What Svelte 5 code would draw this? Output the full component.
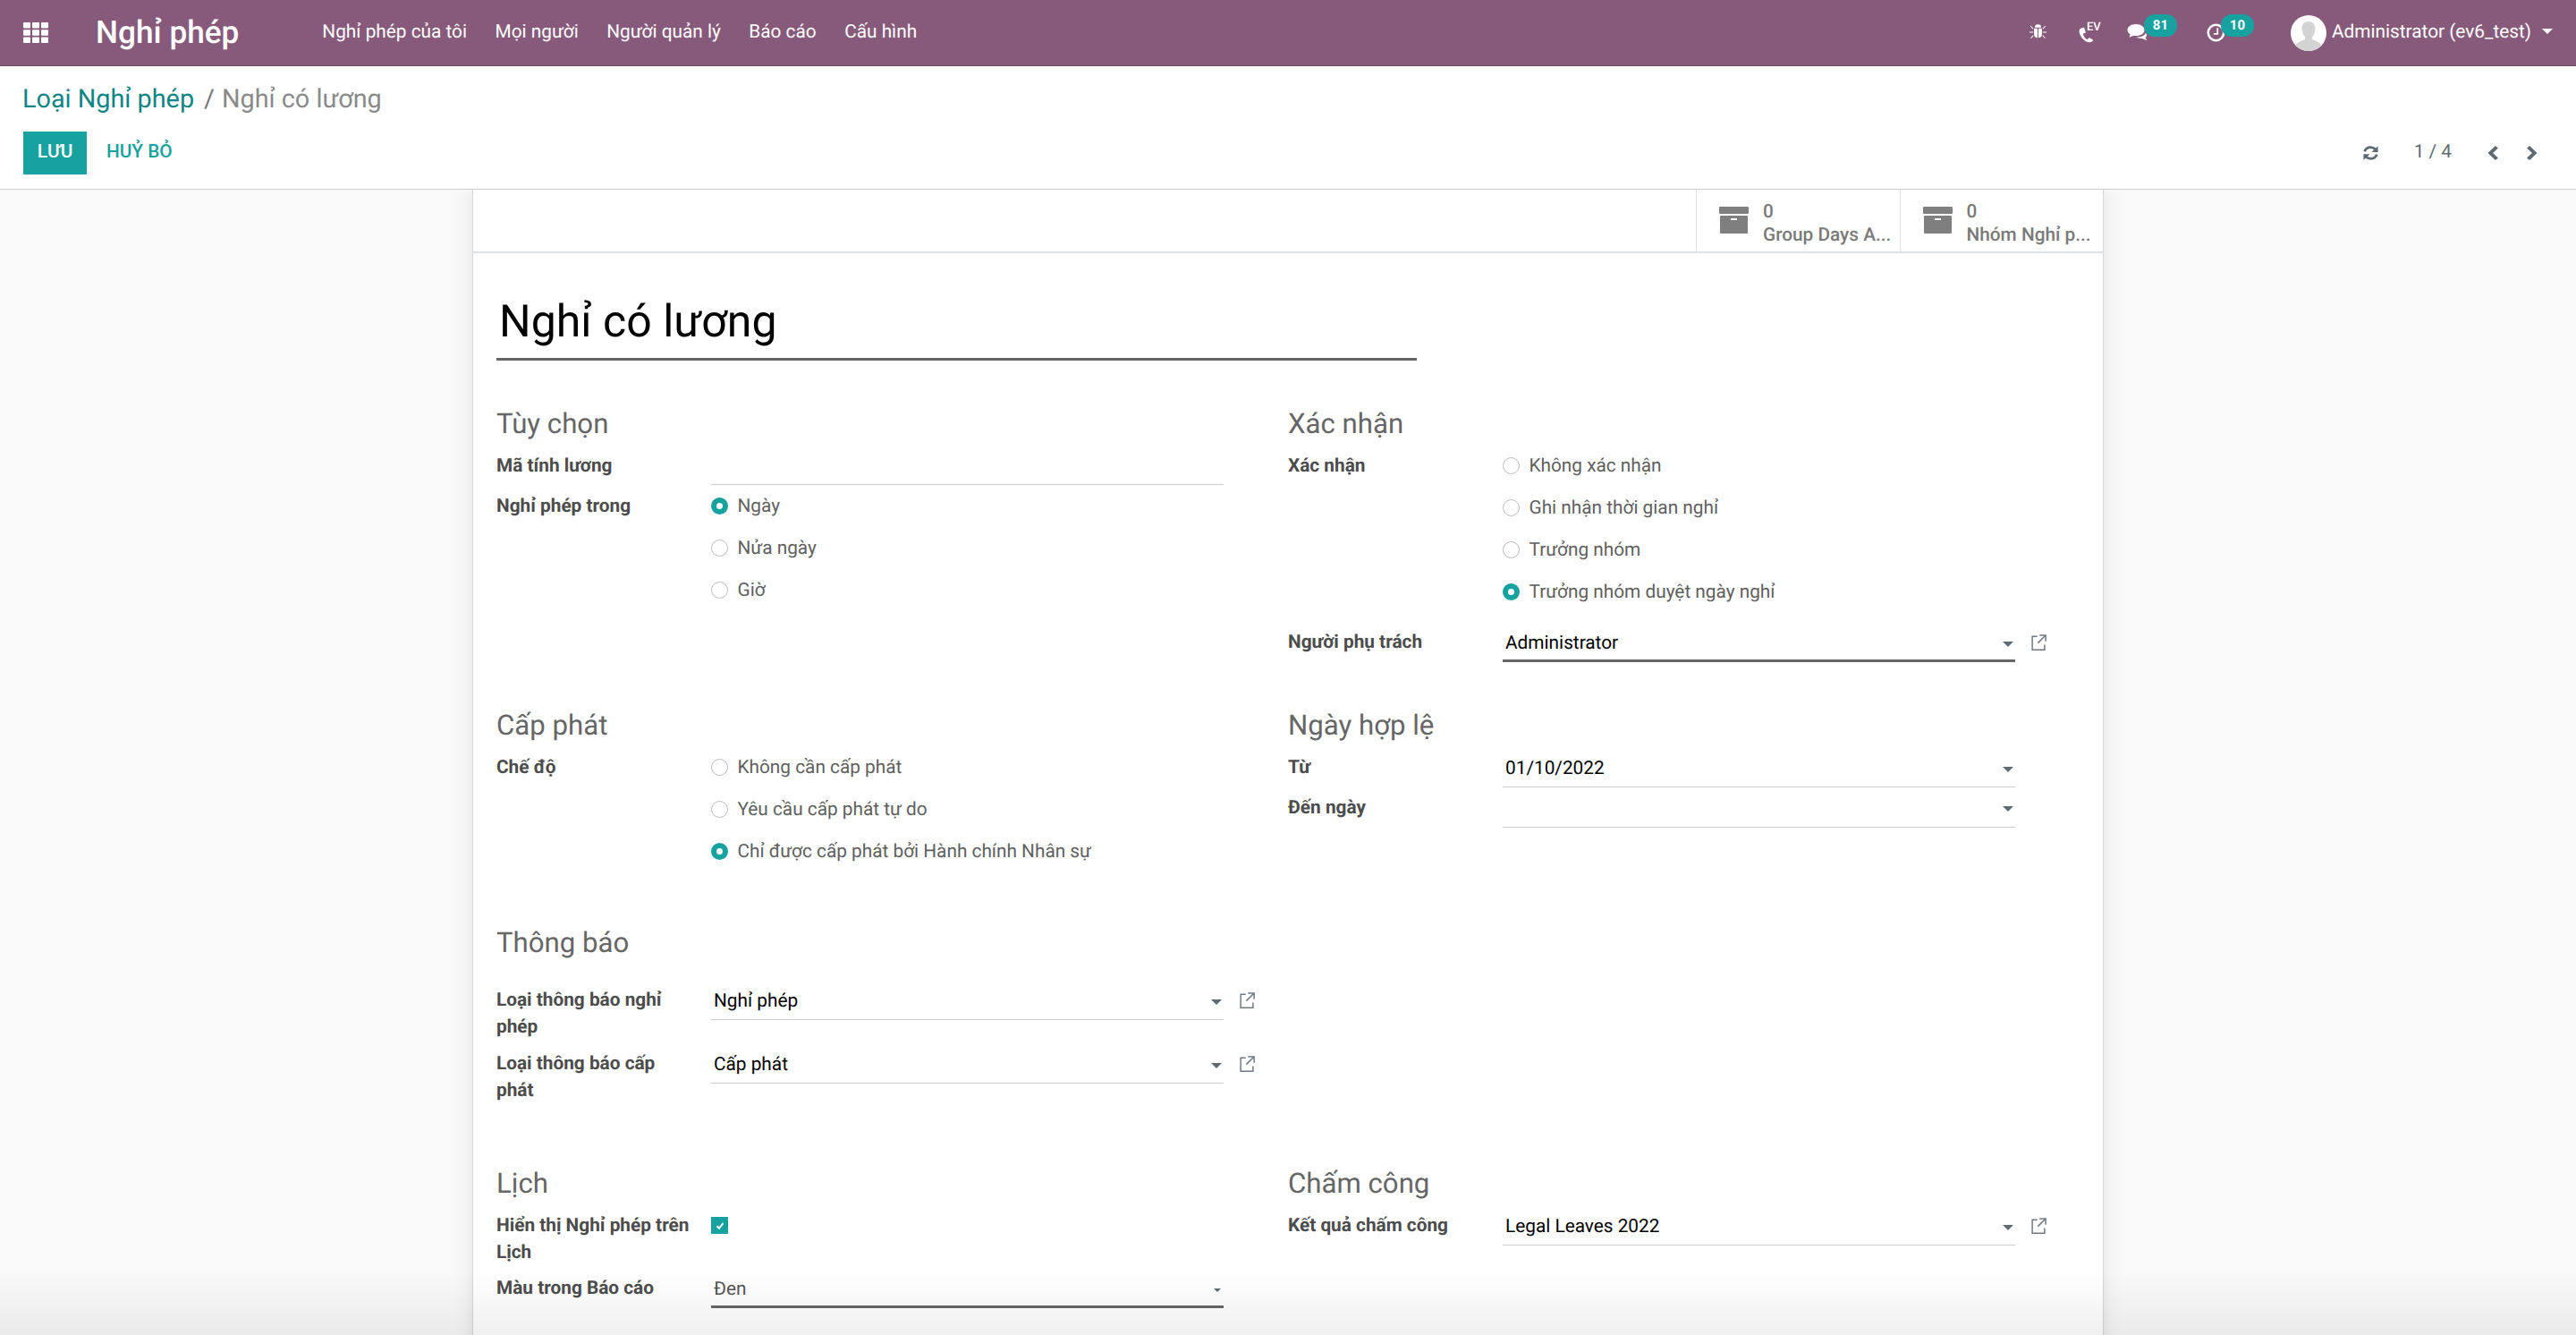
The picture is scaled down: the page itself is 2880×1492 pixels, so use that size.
<script>
  const menus = ['Nghỉ phép của tôi', 'Mọi người', 'Người quản lý', 'Báo cáo', 'Cấu hình'];
  const ext = 'M7 2.5H2.5v12h11V10M9 1.5h5.5V7M14 2L7.5 8.5';
</script>

<div class="page">
  <header class="nav">
    <svg class="apps" viewBox="0 0 28 23" width="28" height="23">
      {#each [0, 8.25, 16.5] as y}{#each [0, 10, 20] as x}<rect {x} {y} width="8" height="6.500" rx="1" fill="#fff" />{/each}{/each}
    </svg>
    <span class="brand">Nghỉ phép</span>
    <nav class="menu">{#each menus as m}<span>{m}</span>{/each}</nav>
    <div class="systray">
      <svg class="bug" viewBox="0 0 16 16" width="19" height="18" preserveAspectRatio="none"><path fill="#fff" d="M5 4.200a3 3 0 0 1 6 0zM4.300 5h3.300v9.500C5.600 14.300 4.300 13 4.300 11zM8.400 5h3.300v6c0 2-1.300 3.300-3.300 3.500zM1.300 2.500l2.400 2.600-.6.600L.7 3.100zM14.700 2.500l.6.600-2.400 2.600-.6-.600zM0 8.400h3.500v1H0zM12.500 8.400H16v1h-3.500zM3.300 11.800l.6.600-2.300 2.800-.7-.6zM12.700 11.800l2.400 2.800-.7.600-2.300-2.800z"/></svg>
      <span class="phone">
        <svg viewBox="0 0 18 24" width="17" height="18" preserveAspectRatio="none"><path fill="#fff" d="M5.500 1 2.600 2.200C.6 3.400.3 6 .8 9c.8 4.600 3.700 9.500 7.700 12.500 2 1.500 4.500 2.200 6.500 1l2-2.100c.3-.4.2-.9-.2-1.200l-3.500-2.600c-.4-.3-.9-.2-1.200.1l-1.500 1.700c-.3.300-.7.300-1 .1-2.200-1.600-4-4.900-4.300-7.500 0-.4.100-.7.500-.9l2-.9c.4-.2.600-.6.500-1L6.700 1.600C6.500 1.100 6 .8 5.500 1z"/></svg>
        <b>EV</b>
      </span>
      <span class="counter c1">
        <svg viewBox="0 0 24 24" width="24" height="21" preserveAspectRatio="none"><path fill="#fff" d="M10 1C4.500 1 .5 4.300.5 8.500c0 2.300 1.200 4.300 3.200 5.700L2.500 18l4.800-2.300c.9.200 1.800.3 2.700.3 5.500 0 9.500-3.300 9.500-7.500S15.500 1 10 1z"/><path fill="#fff" d="M21 12.500c-1.500 3.500-5.500 5.500-10.500 5 1.500 1.300 3.500 1.900 5.800 1.700l6 2.800-1.800-3.700c1.800-1.300 2.300-3.500.5-5.800z"/></svg>
        <em>81</em>
      </span>
      <span class="counter c2">
        <svg viewBox="0 0 24 24" width="21" height="21" fill="none" stroke="#fff" stroke-width="3"><circle cx="12" cy="12" r="10"/><path stroke-width="2" d="M14 6v7.500H9"/></svg>
        <em>10</em>
      </span>
      <span class="user">
        <span class="avatar">
          <svg viewBox="0 0 40 40" width="40" height="40"><circle cx="20" cy="20" r="20" fill="#fff"/><path fill="#d3d3d3" d="M20 7c-5 0-7.500 3.500-7.500 8 0 3.500 1.500 7 3.500 9v3c-3 1.500-9 2.500-10 7 3.500 3.700 8.500 6 14 6s10.500-2.300 14-6c-1-4.500-7-5.500-10-7v-3c2-2 3.500-5.500 3.500-9 0-4.500-2.500-8-7.500-8z"/></svg>
        </span>
        <span class="uname">Administrator (ev6_test)</span>
        <i class="caret"></i>
      </span>
    </div>
  </header>

  <section class="cp">
    <div class="crumb"><a href="#a">Loại Nghỉ phép</a><span class="sep">/</span><span class="cur">Nghỉ có lương</span></div>
    <div class="cpbar">
      <button class="save">LƯU</button>
      <button class="discard">HUỶ BỎ</button>
      <div class="pager">
        <svg viewBox="0 0 16 16" width="19" height="18" preserveAspectRatio="none"><path fill="none" stroke="#5f6b73" stroke-width="2.400" d="M2.300 6.500C3 4 5.300 2.400 8 2.400c2 0 3.300.8 4.600 2.100M13.700 9.500C13 12 10.700 13.600 8 13.600c-2 0-3.300-.8-4.600-2.100"/><path fill="#5f6b73" d="M14.800 1v6h-6zM1.200 15V9h6z"/></svg>
        <span class="count">1 / 4</span>
        <svg class="chev" viewBox="0 0 10 16" width="13" height="18" preserveAspectRatio="none"><path fill="none" stroke="#5f6b73" stroke-width="3.200" d="M8 2 2.500 8 8 14"/></svg>
        <svg class="chev" viewBox="0 0 10 16" width="13" height="18" preserveAspectRatio="none"><path fill="none" stroke="#5f6b73" stroke-width="3.200" d="M2 2l5.500 6L2 14"/></svg>
      </div>
    </div>
  </section>

  <main class="content">
    <div class="sheet">
      <div class="btnbox">
        {#each ['Group Days A...', 'Nhóm Nghỉ p...'] as b}
          <div class="statbtn">
            <svg viewBox="0 0 33 30" width="33" height="30"><rect width="33" height="8" rx="1" fill="#7f7f7f"/><rect x="1" y="10" width="31" height="20" rx="1" fill="#7f7f7f"/><rect x="13" y="13" width="7" height="2" fill="#fff"/></svg>
            <div class="stat"><span>0</span><span>{b}</span></div>
          </div>
        {/each}
      </div>
      <div class="body">
        <h1 class="title">Nghỉ có lương</h1>

        <div class="cols r1">
          <div>
            <h2>Tùy chọn</h2>
            <div class="f f-line"><label>Mã tính lương</label><div class="val line"></div></div>
            <div class="f"><label>Nghỉ phép trong</label>
              <div class="radios">
                <div class="r on"><i></i>Ngày</div><div class="r"><i></i>Nửa ngày</div><div class="r"><i></i>Giờ</div>
              </div>
            </div>
          </div>
          <div>
            <h2>Xác nhận</h2>
            <div class="f"><label>Xác nhận</label>
              <div class="radios">
                <div class="r"><i></i>Không xác nhận</div><div class="r"><i></i>Ghi nhận thời gian nghỉ</div><div class="r"><i></i>Trưởng nhóm</div><div class="r on"><i></i>Trưởng nhóm duyệt ngày nghỉ</div>
              </div>
            </div>
            <div class="f mt"><label>Người phụ trách</label>
              <div class="val select strong"><span>Administrator</span><i class="dd"></i></div>
              <svg class="ext" viewBox="0 0 16 16" width="20" height="20"><path fill="none" stroke="#6f7b83" stroke-width="1.200" d={ext}/></svg>
            </div>
          </div>
        </div>

        <div class="cols r2">
          <div>
            <h2>Cấp phát</h2>
            <div class="f"><label>Chế độ</label>
              <div class="radios">
                <div class="r"><i></i>Không cần cấp phát</div><div class="r"><i></i>Yêu cầu cấp phát tự do</div><div class="r on"><i></i>Chỉ được cấp phát bởi Hành chính Nhân sự</div>
              </div>
            </div>
          </div>
          <div>
            <h2>Ngày hợp lệ</h2>
            <div class="f"><label>Từ</label><div class="val select"><span>01/10/2022</span><i class="dd"></i></div></div>
            <div class="f gap"><label>Đến ngày</label><div class="val select"><span></span><i class="dd"></i></div></div>
          </div>
        </div>

        <div class="cols r3">
          <div>
            <h2>Thông báo</h2>
            <div class="f first"><label>Loại thông báo nghỉ phép</label>
              <div class="val select"><span>Nghỉ phép</span><i class="dd"></i></div>
              <svg class="ext" viewBox="0 0 16 16" width="20" height="20"><path fill="none" stroke="#6f7b83" stroke-width="1.200" d={ext}/></svg>
            </div>
            <div class="f"><label>Loại thông báo cấp phát</label>
              <div class="val select"><span>Cấp phát</span><i class="dd"></i></div>
              <svg class="ext" viewBox="0 0 16 16" width="20" height="20"><path fill="none" stroke="#6f7b83" stroke-width="1.200" d={ext}/></svg>
            </div>
          </div>
          <div></div>
        </div>

        <div class="cols r4">
          <div>
            <h2>Lịch</h2>
            <div class="f"><label>Hiển thị Nghỉ phép trên Lịch</label>
              <span class="check"><svg viewBox="0 0 12 12" width="12" height="12"><path fill="none" stroke="#fff" stroke-width="2" d="M2.500 6.200 5 8.800 9.500 3.200"/></svg></span>
            </div>
            <div class="f"><label>Màu trong Báo cáo</label>
              <div class="val select strong color"><span>Đen</span><i class="dd small"></i></div>
            </div>
          </div>
          <div>
            <h2>Chấm công</h2>
            <div class="f"><label>Kết quả chấm công</label>
              <div class="val select"><span>Legal Leaves 2022</span><i class="dd"></i></div>
              <svg class="ext" viewBox="0 0 16 16" width="20" height="20"><path fill="none" stroke="#6f7b83" stroke-width="1.200" d={ext}/></svg>
            </div>
          </div>
        </div>
      </div>
    </div>
  </main>
  <div class="fade"></div>
</div>

<style>
  :global(body) { margin: 0; background: #f9f9f9; }
  .page { position: relative; width: 2880px; height: 1492px; overflow: hidden; display: flex; flex-direction: column; font-family: Roboto, sans-serif; font-size: 20.800px; color: #4c4c4c; line-height: 1.500; text-rendering: geometricPrecision; }
  .nav { height: 73px; box-sizing: content-box; background: #875a7b; border-bottom: 1px solid #6b4a62; color: #fff; display: flex; align-items: center; padding-left: 26px; flex: none; position: relative; z-index: 2; }
  .brand { font-size: 35.200px; font-weight: 500; margin-left: 53px; line-height: 1; }
  .menu { display: flex; gap: 31.500px; margin-left: 93px; }
  .systray { margin-left: auto; display: flex; align-items: center; padding-right: 26px; }
  .bug { display: block; margin-top: -3px; }
  .phone { position: relative; display: block; width: 25px; height: 26px; margin-left: 36px; }
  .phone svg { position: absolute; left: 0; top: 6px; }
  .phone b { position: absolute; left: 9px; top: 0; font-size: 13px; font-weight: 500; line-height: 13px; }
  .counter { position: relative; display: block; width: 24px; height: 21px; }
  .c1 { margin-left: 29px; }
  .c2 { margin-left: 65px; width: 21px; }
  .counter em { position: absolute; top: -10px; width: 37px; height: 25px; border-radius: 12px; background: #17a2a0; font-style: normal; font-size: 15px; font-weight: 700; text-align: center; line-height: 25px; }
  .c1 em { left: 19px; }
  .c2 em { left: 16px; }
  .user { display: flex; align-items: center; margin-left: 73px; }
  .avatar { display: block; width: 40px; height: 40px; }
  .uname { margin-left: 6px; }
  .caret { width: 0; height: 0; margin-left: 12px; margin-top: -4px; border: 6px solid transparent; border-top-color: #fff; border-bottom: 0; }

  .cp { background: #fff; border-bottom: 1px solid #ccc; height: 137px; box-sizing: content-box; padding: 0 25px; flex: none; position: relative; z-index: 1; }
  .crumb { font-size: 28.800px; line-height: 40px; padding-top: 17px; }
  .crumb a { color: #0e8585; text-decoration: none; }
  .sep { color: #777; margin: 0 8px 0 11px; }
  .cur { color: #8a8a8a; }
  .cpbar { display: flex; align-items: center; margin-top: 16px; }
  button { font: inherit; border: 0; background: none; padding: 0; }
  .save { width: 71px; height: 48px; background: #17a2a0; color: #fff; font-weight: 500; font-size: 20.800px; margin-left: 1px; padding-bottom: 2px; }
  .discard { color: #17a2a0; font-weight: 500; font-size: 20.800px; margin-left: 22px; padding-bottom: 2px; }
  .pager { margin-left: auto; display: flex; align-items: center; color: #5f6b73; padding: 0 18px 1px 0; }
  .count { margin: 0 40px 0 39px; }
  .chev + .chev { margin-left: 30px; }

  .content { flex: 1; min-height: 0; background: #f9f9f9; display: flex; justify-content: center; }
  .sheet { width: 1822px; background: #fff; border-left: 1px solid #d5d8dc; border-right: 1px solid #d5d8dc; box-shadow: 0 0 20px rgba(0,0,0,.1); flex: none; margin-bottom: -20px; }
  .btnbox { height: 69px; border-bottom: 2px solid #dee2e6; display: flex; justify-content: flex-end; }
  .statbtn { width: 227.500px; box-sizing: border-box; border-left: 1px solid #dedede; display: flex; align-items: center; padding-left: 25px; gap: 16px; color: #7a7a7a; }
  .statbtn svg { flex: none; margin-top: -1px; }
  .stat { display: flex; flex-direction: column; font-size: 20.800px; font-weight: 500; line-height: 26px; padding-top: 7px; }
  .body { padding: 0 26px; }
  .title { margin: 40px 0 0; width: 1029px; font-size: 50px; font-weight: 400; color: #000; line-height: 74px; height: 80px; border-bottom: 3px solid #666; padding-left: 3px; box-sizing: border-box; }
  .cols { display: grid; grid-template-columns: 885px 885px; }
  h2 { margin: 0; font-size: 31.200px; font-weight: 400; color: #666; line-height: 44px; }
  .r1 { margin-top: 49px; height: 337px; }
  .r2 { height: 243px; }
  .r3 { height: 269px; }
  .r1 h2, .r2 h2, .r4 h2 { margin-bottom: 10px; }
  .r3 h2 { margin-bottom: 27px; }
  label { display: block; width: 240px; padding-right: 19px; box-sizing: border-box; font-weight: 700; color: #4c4c4c; flex: none; line-height: 30px; }
  .f { display: flex; align-items: flex-start; }
  .f-line { height: 45px; }
  .val { width: 573px; flex: none; }
  .line { height: 35px; border-bottom: 1px solid #ccc; }
  .radios { display: flex; flex-direction: column; gap: 17px; }
  .r { display: flex; align-items: center; height: 30px; box-sizing: border-box; padding-top: 2px; color: #5f5f5f; }
  .r i { width: 19px; height: 19px; box-sizing: border-box; border-radius: 50%; border: 1px solid #b9bcc2; margin: -3px 10.500px 0 0; }
  .r.on i { border: 6px solid #17a2a0; background: #fff; }
  .mt { margin-top: 26px; }
  .select { height: 38px; box-sizing: border-box; border-bottom: 1px solid #ccc; color: #000; display: flex; align-items: center; padding: 0 0 2px 3px; margin-top: -1px; }
  .select span { flex: 1; }
  .strong { height: 37px; margin-top: 0; border-bottom: 3px solid #666; padding: 1px 0 1px 3px; }
  .dd { width: 0; height: 0; border: 6px solid transparent; border-top-color: #5f6b73; border-bottom: 0; margin-right: 2px; }
  .dd.small { border-width: 4px; border-bottom: 0; margin-right: 3px; }
  .color { color: #555; }
  .ext { margin: 5px 0 0 16px; flex: none; }
  .gap { margin-top: 7.500px; }
  .first { margin-bottom: 11px; }
  .check { width: 19px; height: 19px; background: #17a2a0; display: flex; align-items: center; justify-content: center; margin-top: 5px; }
  .r4 .f + .f { margin-top: 10px; }
  .fade { position: absolute; left: 0; right: 0; bottom: 0; height: 72px; background: linear-gradient(to bottom, rgba(0,0,0,0), rgba(0,0,0,.06)); pointer-events: none; }
</style>
